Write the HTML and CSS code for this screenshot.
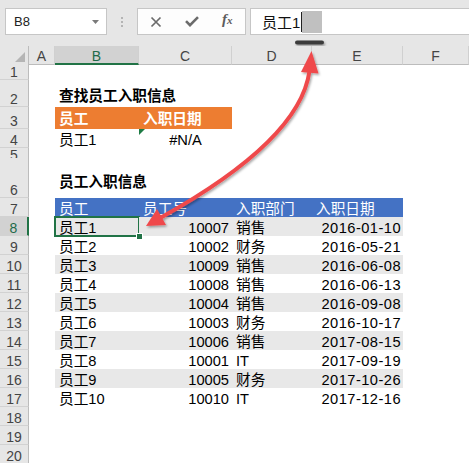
FILE: index.html
```html
<!DOCTYPE html>
<html lang="zh">
<head>
<meta charset="utf-8">
<link rel="stylesheet" href="styles.css">
</head>
<body>
<div class="app">
  <div class="topbar">
    <div class="namebox"><span>B8</span><svg class="dd" width="7" height="4" viewBox="0 0 7 4"><path d="M0 0H7L3.5 4Z" fill="#7a7a7a"/></svg></div>
    <div class="grip"><i></i><i></i><i></i></div>
    <div class="fxbtns">
      <span class="btn"><svg width="12" height="12" viewBox="0 0 12 12"><path d="M1.5 1.5L10.5 10.5M10.5 1.5L1.5 10.5" stroke="#6b6b6b" stroke-width="1.7" fill="none"/></svg></span>
      <span class="btn"><svg width="14" height="11" viewBox="0 0 14 11"><path d="M1 5.2L5 9.2L13 1.2" stroke="#6b6b6b" stroke-width="2.6" fill="none"/></svg></span>
      <span class="btn fx"><span class="f">f</span><span class="x">x</span></span>
    </div>
    <div class="formula"><span class="ftext">员工1</span><span class="caret"></span><span class="selblk"></span></div>
  </div>

  <div class="sheet">
    <div class="row hdr">
      <div class="corner"><svg width="10" height="10" viewBox="0 0 10 10"><path d="M10 0V10H0Z" fill="#b5b5b5"/></svg></div>
      <div class="ch">A</div><div class="ch on">B</div><div class="ch">C</div><div class="ch">D</div><div class="ch">E</div><div class="ch">F</div>
    </div>
    <div class="row h17"><div class="rh">1</div></div>
    <div class="row h27"><div class="rh">2</div><div></div><div class="cell title">查找员工入职信息</div></div>
    <div class="row h22"><div class="rh">3</div><div></div><div class="cell orange">员工</div><div class="cell orange">入职日期</div></div>
    <div class="row h19"><div class="rh">4</div><div></div><div class="cell">员工1</div><div class="cell center err">#N/A</div></div>
    <div class="row h10"><div class="rh">5</div></div>
    <div class="row h40"><div class="rh">6</div><div></div><div class="cell title t2">员工入职信息</div></div>
    <div class="row h19"><div class="rh">7</div><div></div><div class="cell blue">员工</div><div class="cell blue">员工号</div><div class="cell blue">入职部门</div><div class="cell blue">入职日期</div></div>
    <div class="row h19 band"><div class="rh on">8</div><div></div><div class="cell sel">员工1</div><div class="cell num">10007</div><div class="cell">销售</div><div class="cell num date">2016-01-10</div></div>
    <div class="row h19"><div class="rh">9</div><div></div><div class="cell">员工2</div><div class="cell num">10002</div><div class="cell">财务</div><div class="cell num date">2016-05-21</div></div>
    <div class="row h19 band"><div class="rh">10</div><div></div><div class="cell">员工3</div><div class="cell num">10009</div><div class="cell">销售</div><div class="cell num date">2016-06-08</div></div>
    <div class="row h19"><div class="rh">11</div><div></div><div class="cell">员工4</div><div class="cell num">10008</div><div class="cell">销售</div><div class="cell num date">2016-06-13</div></div>
    <div class="row h19 band"><div class="rh">12</div><div></div><div class="cell">员工5</div><div class="cell num">10004</div><div class="cell">销售</div><div class="cell num date">2016-09-08</div></div>
    <div class="row h19"><div class="rh">13</div><div></div><div class="cell">员工6</div><div class="cell num">10003</div><div class="cell">财务</div><div class="cell num date">2016-10-17</div></div>
    <div class="row h19 band"><div class="rh">14</div><div></div><div class="cell">员工7</div><div class="cell num">10006</div><div class="cell">销售</div><div class="cell num date">2017-08-15</div></div>
    <div class="row h19"><div class="rh">15</div><div></div><div class="cell">员工8</div><div class="cell num">10001</div><div class="cell">IT</div><div class="cell num date">2017-09-19</div></div>
    <div class="row h19 band"><div class="rh">16</div><div></div><div class="cell">员工9</div><div class="cell num">10005</div><div class="cell">财务</div><div class="cell num date">2017-10-26</div></div>
    <div class="row h19"><div class="rh">17</div><div></div><div class="cell">员工10</div><div class="cell num">10010</div><div class="cell">IT</div><div class="cell num date">2017-12-16</div></div>
    <div class="row h19"><div class="rh">18</div></div>
    <div class="row h19"><div class="rh">19</div></div>
    <div class="row h19"><div class="rh">20</div></div>
  </div>

  <svg class="annot" width="469" height="463" viewBox="0 0 469 463">
    <defs>
      <filter id="sh" x="-20%" y="-20%" width="140%" height="140%">
        <feDropShadow dx="1.2" dy="1.6" stdDeviation="1.1" flood-color="#000" flood-opacity="0.35"/>
      </filter>
    </defs>
    <rect x="295" y="40.5" width="29" height="4" rx="2" fill="#3b3b3b" filter="url(#sh)"/>
    <g filter="url(#sh)">
      <path d="M161 217.5 Q300 140 309.5 71" stroke="#ef4a4c" stroke-width="4" fill="none"/>
      <path d="M146 226 L166 225 L157 209 Z" fill="#ef4a4c"/>
      <path d="M311.5 51 L301 72 L318.5 73.5 Z" fill="#ef4a4c"/>
    </g>
  </svg>
</div>
</body>
</html>
```

FILE: styles.css
```css
html, body {
  margin: 0;
  padding: 0;
  background: #ffffff;
}

body {
  font-family: "Liberation Sans", "Noto Sans CJK SC", sans-serif;
  color: #000;
}

.app {
  position: relative;
  width: 469px;
  height: 463px;
  overflow: hidden;
  background: #fff;
}

/* ---------- formula bar ---------- */
.topbar {
  height: 46px;
  box-sizing: border-box;
  padding-top: 8px;
  background: #e6e6e6;
  display: flex;
  align-items: flex-start;
}

.namebox {
  margin-left: 5px;
  width: 102px;
  height: 27px;
  box-sizing: border-box;
  border: 1px solid #c6c6c6;
  background: #fff;
  display: flex;
  align-items: center;
  justify-content: space-between;
  padding: 0 7px 0 8px;
  font-size: 13px;
  color: #222;
}

.namebox .dd {
  display: block;
}

.grip {
  width: 30px;
  height: 27px;
  display: flex;
  flex-direction: column;
  align-items: center;
  justify-content: center;
  gap: 2px;
}

.grip i {
  display: block;
  width: 2px;
  height: 2px;
  background: #b4b4b4;
}

.fxbtns {
  width: 109px;
  height: 27px;
  box-sizing: border-box;
  border: 1px solid #c6c6c6;
  background: #fdfdfd;
  display: flex;
  align-items: center;
}

.btn {
  width: 36px;
  height: 25px;
  display: flex;
  align-items: center;
  justify-content: center;
}

.btn svg {
  display: block;
}

.fx {
  font-family: "Liberation Serif", serif;
  font-style: italic;
  color: #5c5c5c;
  font-weight: bold;
  align-items: baseline;
  padding-top: 2px;
  box-sizing: border-box;
}

.fx .f {
  font-size: 15px;
}

.fx .x {
  font-size: 11px;
}

.formula {
  margin-left: 4px;
  flex: 1;
  height: 27px;
  box-sizing: border-box;
  border: 1px solid #c6c6c6;
  border-right: none;
  background: #fff;
  display: flex;
  align-items: center;
  padding-left: 11px;
  font-size: 15px;
  color: #111;
}

.caret {
  width: 1px;
  height: 20px;
  background: #222;
  margin-left: 1px;
}

.selblk {
  width: 20px;
  height: 22px;
  background: #c0c0c0;
}

/* ---------- sheet ---------- */
.row {
  display: grid;
  grid-template-columns: 29px 26px 84px 93px 80px 91px 1fr;
}

.hdr { height: 17px; }
.h17 { height: 17px; }
.h27 { height: 27px; }
.h22 { height: 22px; }
.h19 { height: 19px; }
.h10 { height: 10px; }
.h40 { height: 40px; }

.corner {
  background: #e6e6e6;
  border-right: 1px solid #bcbcbc;
  border-bottom: 1px solid #bcbcbc;
  box-sizing: border-box;
  display: flex;
  align-items: flex-end;
  justify-content: flex-end;
  padding: 0 3px 2px 0;
}

.corner svg {
  display: block;
}

.ch {
  background: #e6e6e6;
  border-right: 1px solid #d0d0d0;
  border-bottom: 1px solid #bcbcbc;
  box-sizing: border-box;
  display: flex;
  align-items: center;
  justify-content: center;
  padding-top: 2px;
  font-size: 14px;
  line-height: 14px;
  color: #444;
}

.ch.on {
  background: #d2d2d2;
  border-bottom: 2px solid #217346;
  color: #1f6b4a;
  padding-top: 3px;
}

.rh {
  background: #e6e6e6;
  border-right: 1px solid #bcbcbc;
  border-bottom: 1px solid #d2d2d2;
  box-sizing: border-box;
  display: flex;
  align-items: flex-end;
  justify-content: center;
  font-size: 14px;
  line-height: 14px;
  color: #444;
}

.rh.on {
  background: #d2d2d2;
  border-right: 2px solid #217346;
  color: #1f6b4a;
}

.cell {
  display: flex;
  align-items: flex-end;
  padding: 0 4px;
  font-size: 14.67px;
  line-height: 15px;
  white-space: nowrap;
  position: relative;
}

.title {
  font-weight: bold;
  padding-bottom: 3px;
}

.title.t2 {
  padding-bottom: 8px;
}

.orange {
  background: #ed7d31;
  color: #fff;
  font-weight: bold;
  padding-bottom: 2px;
}

.blue {
  background: #4472c4;
  color: #fff;
}

.band .cell {
  background: #e8e8e8;
}

.num {
  justify-content: flex-end;
  padding-right: 3px;
}

.date {
  letter-spacing: 0.45px;
  padding-right: 2px;
}

.center {
  justify-content: center;
}

.err::before {
  content: "";
  position: absolute;
  left: 0;
  top: 0;
  width: 0;
  height: 0;
  border-top: 6px solid #1e7b45;
  border-right: 6px solid transparent;
}

.sel::after {
  content: "";
  position: absolute;
  left: -1px;
  top: -1px;
  right: -1px;
  bottom: -1px;
  border: 2px solid #217346;
}

.sel::before {
  content: "";
  position: absolute;
  right: -4px;
  bottom: -4px;
  width: 5px;
  height: 5px;
  background: #217346;
  border: 1px solid #fff;
  z-index: 2;
}

/* ---------- annotation overlay ---------- */
.annot {
  position: absolute;
  left: 0;
  top: 0;
  pointer-events: none;
}
```
